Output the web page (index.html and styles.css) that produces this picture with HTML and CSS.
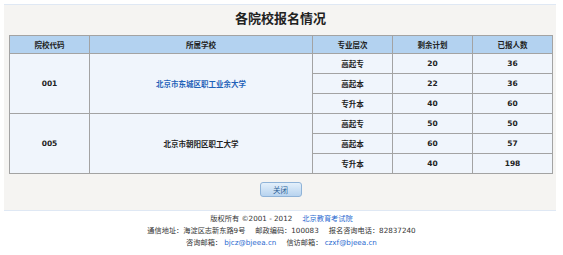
FILE: index.html
```html
<!DOCTYPE html>
<html lang="zh-CN">
<head>
<meta charset="utf-8">
<title>各院校报名情况</title>
<link rel="stylesheet" href="styles.css">
</head>
<body>
<div class="panel">
  <h1 class="title">各院校报名情况</h1>
  <table class="grid">
    <colgroup>
      <col class="c1"><col class="c2"><col class="c3"><col class="c4"><col class="c5">
    </colgroup>
    <thead>
      <tr><th>院校代码</th><th>所属学校</th><th>专业层次</th><th>剩余计划</th><th>已报人数</th></tr>
    </thead>
    <tbody>
      <tr><td rowspan="3">001</td><td rowspan="3"><a class="school" href="#">北京市东城区职工业余大学</a></td><td>高起专</td><td>20</td><td>36</td></tr>
      <tr><td>高起本</td><td>22</td><td>36</td></tr>
      <tr><td>专升本</td><td>40</td><td>60</td></tr>
      <tr><td rowspan="3">005</td><td rowspan="3">北京市朝阳区职工大学</td><td>高起专</td><td>50</td><td>50</td></tr>
      <tr><td>高起本</td><td>60</td><td>57</td></tr>
      <tr><td>专升本</td><td>40</td><td>198</td></tr>
    </tbody>
  </table>
  <div class="actions"><button class="btn" type="button">关闭</button></div>
</div>
<div class="footer">
  <p>版权所有 ©2001 - 2012<span class="gap"></span><a href="#">北京教育考试院</a></p>
  <p>通信地址：海淀区志新东路9号<span class="gap"></span>邮政编码：100083<span class="gap"></span>报名咨询电话：82837240</p>
  <p>咨询邮箱： <a href="#">bjcz@bjeea.cn</a><span class="gap"></span>信访邮箱： <a href="#">czxf@bjeea.cn</a></p>
</div>
</body>
</html>
```
FILE: styles.css
```css
html, body {
  margin: 0;
  padding: 0;
  background: #ffffff;
}
body {
  font-family: "DejaVu Sans", "Noto Sans CJK SC", sans-serif;
  color: #222;
}
.panel {
  margin: 4px 7px 0 4px;
  width: 552px;
  box-sizing: border-box;
  background: #f5f4f2;
  border-top: 1px solid #dfe8f4;
  border-bottom: 1px solid #dfe8f4;
  padding: 0 4px 13px 5px;
}
.title {
  margin: 0;
  height: 30px;
  line-height: 25px;
  text-align: center;
  font-family: "Noto Sans CJK SC", sans-serif;
  font-size: 13px;
  font-weight: bold;
  color: #222;
}
.grid {
  width: 543px;
  border-collapse: collapse;
  table-layout: fixed;
  border: 1px solid #a3a3a3;
  font-size: 7.5px;
  font-weight: bold;
}
.c1 { width: 80px; }
.c2 { width: 223px; }
.c3 { width: 80px; }
.c4 { width: 80px; }
.c5 { width: 80px; }
.grid th, .grid td {
  border: 1px solid #a3a3a3;
  text-align: center;
  padding: 0;
  font-weight: bold;
}
.grid th {
  background: #b3d2f0;
  height: 17px;
  color: #222;
}
.grid td {
  background: #f0f5fc;
  height: 19px;
  color: #222;
}
.school {
  color: #1f62b8;
  text-decoration: none;
}
.actions {
  display: flex;
  justify-content: center;
  padding-top: 8px;
  padding-left: 0;
}
.btn {
  width: 42px;
  height: 15px;
  padding: 0;
  border: 1px solid #8fb3d8;
  border-radius: 3px;
  background: linear-gradient(#e4f0fb, #b7d3ef);
  color: #2a5d95;
  font-family: "Noto Sans CJK SC", sans-serif;
  font-size: 7.5px;
  line-height: 13px;
}
.footer {
  padding-top: 2px;
  text-align: center;
  font-family: "DejaVu Sans", "Noto Sans CJK SC", sans-serif;
  font-size: 7.2px;
  color: #333;
}
.footer p {
  margin: 0;
  height: 12px;
  line-height: 12px;
}
.footer a {
  color: #2a6ad0;
  text-decoration: none;
}
.gap {
  display: inline-block;
  width: 10px;
}
```
